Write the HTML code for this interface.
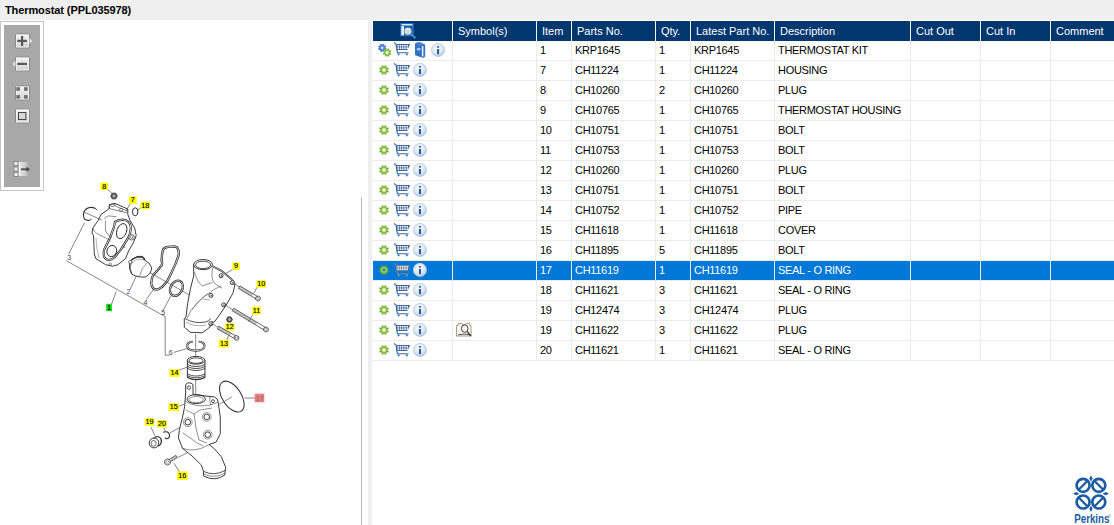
<!DOCTYPE html>
<html><head><meta charset="utf-8"><style>
*{margin:0;padding:0;box-sizing:border-box}
html,body{width:1114px;height:525px;overflow:hidden;background:#fff;font-family:"Liberation Sans",sans-serif;font-size:11px;color:#000}
.a{position:absolute}
#top{left:0;top:0;width:1114px;height:20px;background:#efefef}
#title{left:5px;top:3px;font-weight:bold;font-size:11px;line-height:14px;white-space:nowrap;letter-spacing:-0.1px}
#strip{left:368px;top:20px;width:4px;height:505px;background:#efefef}
#tb{left:0;top:21px;width:44px;height:170px;border:1px solid #c4c4c4;background:#fff}
#tbi{left:4px;top:25px;width:36px;height:162px;background:#a8a8a8}
.hd{top:21px;height:20px;background:#00376f;color:#fff;line-height:20px;white-space:nowrap;overflow:hidden;padding-left:5px}
.hs{top:21px;height:20px;width:1px;background:#f4f4f4}
.c{height:19px;line-height:19px;white-space:nowrap;overflow:hidden;padding-left:3px;letter-spacing:-0.3px}
.gl{height:1px;background:#ebebeb}
.vl{width:1px;background:#ebebeb}
svg{position:absolute;overflow:visible}
</style></head><body>

<svg width="0" height="0" style="left:0;top:0">
<defs>
 <radialGradient id="ig" cx="45%" cy="40%" r="60%">
  <stop offset="0" stop-color="#f6f9fc"/><stop offset="0.6" stop-color="#dfe9f3"/><stop offset="1" stop-color="#a9c4de"/>
 </radialGradient>
 <radialGradient id="gg" cx="50%" cy="50%" r="50%">
  <stop offset="0.3" stop-color="#9ccf52"/><stop offset="1" stop-color="#6fa828"/>
 </radialGradient>
 <radialGradient id="gb" cx="50%" cy="50%" r="50%">
  <stop offset="0.3" stop-color="#5a95ef"/><stop offset="1" stop-color="#2d66cc"/>
 </radialGradient>
 <linearGradient id="bg" x1="0" y1="0" x2="0" y2="1">
  <stop offset="0" stop-color="#f4f4f4"/><stop offset="1" stop-color="#d2d2d2"/>
 </linearGradient>
 <symbol id="gear" viewBox="-5.5 -5.5 11 11">
  <path fill="url(#gg)" d="M3.69,0.27 L5.11,0.94 L4.28,2.95 L2.80,2.42 L2.42,2.80 L2.95,4.28 L0.94,5.11 L0.27,3.69 L-0.27,3.69 L-0.94,5.11 L-2.95,4.28 L-2.42,2.80 L-2.80,2.42 L-4.28,2.95 L-5.11,0.94 L-3.69,0.27 L-3.69,-0.27 L-5.11,-0.94 L-4.28,-2.95 L-2.80,-2.42 L-2.42,-2.80 L-2.95,-4.28 L-0.94,-5.11 L-0.27,-3.69 L0.27,-3.69 L0.94,-5.11 L2.95,-4.28 L2.42,-2.80 L2.80,-2.42 L4.28,-2.95 L5.11,-0.94 L3.69,-0.27Z"/>
  <circle r="2.2" fill="#c8ec98" opacity="0.6"/><circle r="1.5" fill="#fff"/>
 </symbol>
 <symbol id="gearsel" viewBox="-5.5 -5.5 11 11">
  <path fill="url(#gg)" d="M3.69,0.27 L5.11,0.94 L4.28,2.95 L2.80,2.42 L2.42,2.80 L2.95,4.28 L0.94,5.11 L0.27,3.69 L-0.27,3.69 L-0.94,5.11 L-2.95,4.28 L-2.42,2.80 L-2.80,2.42 L-4.28,2.95 L-5.11,0.94 L-3.69,0.27 L-3.69,-0.27 L-5.11,-0.94 L-4.28,-2.95 L-2.80,-2.42 L-2.42,-2.80 L-2.95,-4.28 L-0.94,-5.11 L-0.27,-3.69 L0.27,-3.69 L0.94,-5.11 L2.95,-4.28 L2.42,-2.80 L2.80,-2.42 L4.28,-2.95 L5.11,-0.94 L3.69,-0.27Z"/>
  <circle r="2.2" fill="#c8ec98" opacity="0.6"/><circle r="1.5" fill="#1a78c8"/>
 </symbol>
 <symbol id="gearb" viewBox="-5.5 -5.5 11 11">
  <path fill="url(#gb)" d="M3.69,0.27 L5.11,0.94 L4.28,2.95 L2.80,2.42 L2.42,2.80 L2.95,4.28 L0.94,5.11 L0.27,3.69 L-0.27,3.69 L-0.94,5.11 L-2.95,4.28 L-2.42,2.80 L-2.80,2.42 L-4.28,2.95 L-5.11,0.94 L-3.69,0.27 L-3.69,-0.27 L-5.11,-0.94 L-4.28,-2.95 L-2.80,-2.42 L-2.42,-2.80 L-2.95,-4.28 L-0.94,-5.11 L-0.27,-3.69 L0.27,-3.69 L0.94,-5.11 L2.95,-4.28 L2.42,-2.80 L2.80,-2.42 L4.28,-2.95 L5.11,-0.94 L3.69,-0.27Z"/>
  <circle r="1.4" fill="#fff"/>
 </symbol>
 <linearGradient id="fade" x1="0" y1="0" x2="1" y2="0">
  <stop offset="0" stop-color="#e8e8e8"/><stop offset="0.6" stop-color="#cfcfcf"/><stop offset="1" stop-color="#a8a8a8"/>
 </linearGradient>
 <symbol id="cart" viewBox="0 0 17 14">
  <path d="M0.4,0.4 L2.6,2.4 L3.3,8 L3.8,10.7 H15" fill="none" stroke="#44689b" stroke-width="1.15"/>
  <path d="M2.5,2 H16.6 L13.7,8 H3.1 Z" fill="#44689b"/>
  <rect x="3.9" y="3.0" width="1.5" height="1.55" fill="#fff"/><rect x="6.15" y="3.0" width="1.5" height="1.55" fill="#fff"/><rect x="8.4" y="3.0" width="1.5" height="1.55" fill="#fff"/><rect x="10.65" y="3.0" width="1.5" height="1.55" fill="#fff"/><rect x="12.9" y="3.0" width="1.5" height="1.55" fill="#fff"/><rect x="3.9" y="5.35" width="1.5" height="1.6" fill="#fff"/><rect x="6.15" y="5.35" width="1.5" height="1.6" fill="#fff"/><rect x="8.4" y="5.35" width="1.5" height="1.6" fill="#fff"/><rect x="10.65" y="5.35" width="1.5" height="1.6" fill="#fff"/><rect x="12.9" y="5.35" width="1.5" height="1.6" fill="#fff"/>
  <circle cx="5" cy="12.3" r="1.15" fill="#2f7fd0"/>
  <circle cx="13.2" cy="12.3" r="1.15" fill="#2f7fd0"/>
 </symbol>
 <symbol id="cartsel" viewBox="0 0 17 14">
  <path d="M0.4,0.4 L2.6,2.4 L3.3,8 L3.8,10.7 H15" fill="none" stroke="#7a8797" stroke-width="1.15"/>
  <path d="M2.5,2 H16.6 L13.7,8 H3.1 Z" fill="#7a8797"/>
  <rect x="3.9" y="3.0" width="1.5" height="1.55" fill="#e6ebf2"/><rect x="6.15" y="3.0" width="1.5" height="1.55" fill="#e6ebf2"/><rect x="8.4" y="3.0" width="1.5" height="1.55" fill="#e6ebf2"/><rect x="10.65" y="3.0" width="1.5" height="1.55" fill="#e6ebf2"/><rect x="12.9" y="3.0" width="1.5" height="1.55" fill="#e6ebf2"/><rect x="3.9" y="5.35" width="1.5" height="1.6" fill="#e6ebf2"/><rect x="6.15" y="5.35" width="1.5" height="1.6" fill="#e6ebf2"/><rect x="8.4" y="5.35" width="1.5" height="1.6" fill="#e6ebf2"/><rect x="10.65" y="5.35" width="1.5" height="1.6" fill="#e6ebf2"/><rect x="12.9" y="5.35" width="1.5" height="1.6" fill="#e6ebf2"/>
  <circle cx="5" cy="12.3" r="1.15" fill="#8a98a8"/>
  <circle cx="13.2" cy="12.3" r="1.15" fill="#8a98a8"/>
 </symbol>
 <symbol id="info" viewBox="0 0 14 14">
  <circle cx="7" cy="7" r="6.8" fill="url(#ig)"/>
  <circle cx="7" cy="7" r="6.5" fill="none" stroke="#b7cde3" stroke-width="0.6"/>
  <rect x="6" y="3.2" width="2.1" height="1.5" fill="#2c5b9b"/>
  <rect x="6" y="6.1" width="2.1" height="5.1" fill="#2c5b9b"/>
 </symbol>
</defs>
</svg>

<div class="a" id="top"></div><div class="a" id="title">Thermostat (PPL035978)</div><div class="a" id="strip"></div><div class="a" style="left:361px;top:197px;width:1px;height:328px;background:#b9b9b9"></div><div class="a" id="tb"></div><div class="a" id="tbi"></div><div class="a hd" style="left:373px;width:79px"></div><div class="a hd" style="left:453px;width:83px">Symbol(s)</div><div class="a hd" style="left:537px;width:34px">Item</div><div class="a hd" style="left:572px;width:83px">Parts No.</div><div class="a hd" style="left:656px;width:34px">Qty.</div><div class="a hd" style="left:691px;width:83px">Latest Part No.</div><div class="a hd" style="left:775px;width:135px">Description</div><div class="a hd" style="left:911px;width:69px">Cut Out</div><div class="a hd" style="left:981px;width:69px">Cut In</div><div class="a hd" style="left:1051px;width:63px">Comment</div><div class="a hs" style="left:452px"></div><div class="a hs" style="left:536px"></div><div class="a hs" style="left:571px"></div><div class="a hs" style="left:655px"></div><div class="a hs" style="left:690px"></div><div class="a hs" style="left:774px"></div><div class="a hs" style="left:910px"></div><div class="a hs" style="left:980px"></div><div class="a hs" style="left:1050px"></div><div class="a gl" style="left:373px;top:60px;width:741px"></div><div class="a c" style="left:537px;top:41px;width:34px;color:#000">1</div><div class="a c" style="left:572px;top:41px;width:83px;color:#000">KRP1645</div><div class="a c" style="left:656px;top:41px;width:34px;color:#000">1</div><div class="a c" style="left:691px;top:41px;width:83px;color:#000">KRP1645</div><div class="a c" style="left:775px;top:41px;width:135px;color:#000">THERMOSTAT KIT</div><div class="a gl" style="left:373px;top:80px;width:741px"></div><div class="a c" style="left:537px;top:61px;width:34px;color:#000">7</div><div class="a c" style="left:572px;top:61px;width:83px;color:#000">CH11224</div><div class="a c" style="left:656px;top:61px;width:34px;color:#000">1</div><div class="a c" style="left:691px;top:61px;width:83px;color:#000">CH11224</div><div class="a c" style="left:775px;top:61px;width:135px;color:#000">HOUSING</div><div class="a gl" style="left:373px;top:100px;width:741px"></div><div class="a c" style="left:537px;top:81px;width:34px;color:#000">8</div><div class="a c" style="left:572px;top:81px;width:83px;color:#000">CH10260</div><div class="a c" style="left:656px;top:81px;width:34px;color:#000">2</div><div class="a c" style="left:691px;top:81px;width:83px;color:#000">CH10260</div><div class="a c" style="left:775px;top:81px;width:135px;color:#000">PLUG</div><div class="a gl" style="left:373px;top:120px;width:741px"></div><div class="a c" style="left:537px;top:101px;width:34px;color:#000">9</div><div class="a c" style="left:572px;top:101px;width:83px;color:#000">CH10765</div><div class="a c" style="left:656px;top:101px;width:34px;color:#000">1</div><div class="a c" style="left:691px;top:101px;width:83px;color:#000">CH10765</div><div class="a c" style="left:775px;top:101px;width:135px;color:#000">THERMOSTAT HOUSING</div><div class="a gl" style="left:373px;top:140px;width:741px"></div><div class="a c" style="left:537px;top:121px;width:34px;color:#000">10</div><div class="a c" style="left:572px;top:121px;width:83px;color:#000">CH10751</div><div class="a c" style="left:656px;top:121px;width:34px;color:#000">1</div><div class="a c" style="left:691px;top:121px;width:83px;color:#000">CH10751</div><div class="a c" style="left:775px;top:121px;width:135px;color:#000">BOLT</div><div class="a gl" style="left:373px;top:160px;width:741px"></div><div class="a c" style="left:537px;top:141px;width:34px;color:#000">11</div><div class="a c" style="left:572px;top:141px;width:83px;color:#000">CH10753</div><div class="a c" style="left:656px;top:141px;width:34px;color:#000">1</div><div class="a c" style="left:691px;top:141px;width:83px;color:#000">CH10753</div><div class="a c" style="left:775px;top:141px;width:135px;color:#000">BOLT</div><div class="a gl" style="left:373px;top:180px;width:741px"></div><div class="a c" style="left:537px;top:161px;width:34px;color:#000">12</div><div class="a c" style="left:572px;top:161px;width:83px;color:#000">CH10260</div><div class="a c" style="left:656px;top:161px;width:34px;color:#000">1</div><div class="a c" style="left:691px;top:161px;width:83px;color:#000">CH10260</div><div class="a c" style="left:775px;top:161px;width:135px;color:#000">PLUG</div><div class="a gl" style="left:373px;top:200px;width:741px"></div><div class="a c" style="left:537px;top:181px;width:34px;color:#000">13</div><div class="a c" style="left:572px;top:181px;width:83px;color:#000">CH10751</div><div class="a c" style="left:656px;top:181px;width:34px;color:#000">1</div><div class="a c" style="left:691px;top:181px;width:83px;color:#000">CH10751</div><div class="a c" style="left:775px;top:181px;width:135px;color:#000">BOLT</div><div class="a gl" style="left:373px;top:220px;width:741px"></div><div class="a c" style="left:537px;top:201px;width:34px;color:#000">14</div><div class="a c" style="left:572px;top:201px;width:83px;color:#000">CH10752</div><div class="a c" style="left:656px;top:201px;width:34px;color:#000">1</div><div class="a c" style="left:691px;top:201px;width:83px;color:#000">CH10752</div><div class="a c" style="left:775px;top:201px;width:135px;color:#000">PIPE</div><div class="a gl" style="left:373px;top:240px;width:741px"></div><div class="a c" style="left:537px;top:221px;width:34px;color:#000">15</div><div class="a c" style="left:572px;top:221px;width:83px;color:#000">CH11618</div><div class="a c" style="left:656px;top:221px;width:34px;color:#000">1</div><div class="a c" style="left:691px;top:221px;width:83px;color:#000">CH11618</div><div class="a c" style="left:775px;top:221px;width:135px;color:#000">COVER</div><div class="a gl" style="left:373px;top:260px;width:741px"></div><div class="a c" style="left:537px;top:241px;width:34px;color:#000">16</div><div class="a c" style="left:572px;top:241px;width:83px;color:#000">CH11895</div><div class="a c" style="left:656px;top:241px;width:34px;color:#000">5</div><div class="a c" style="left:691px;top:241px;width:83px;color:#000">CH11895</div><div class="a c" style="left:775px;top:241px;width:135px;color:#000">BOLT</div><div class="a" style="left:373px;top:261px;width:741px;height:19px;background:#0078d7"></div><div class="a gl" style="left:373px;top:280px;width:741px"></div><div class="a c" style="left:537px;top:261px;width:34px;color:#fff">17</div><div class="a c" style="left:572px;top:261px;width:83px;color:#fff">CH11619</div><div class="a c" style="left:656px;top:261px;width:34px;color:#fff">1</div><div class="a c" style="left:691px;top:261px;width:83px;color:#fff">CH11619</div><div class="a c" style="left:775px;top:261px;width:135px;color:#fff">SEAL - O RING</div><div class="a gl" style="left:373px;top:300px;width:741px"></div><div class="a c" style="left:537px;top:281px;width:34px;color:#000">18</div><div class="a c" style="left:572px;top:281px;width:83px;color:#000">CH11621</div><div class="a c" style="left:656px;top:281px;width:34px;color:#000">3</div><div class="a c" style="left:691px;top:281px;width:83px;color:#000">CH11621</div><div class="a c" style="left:775px;top:281px;width:135px;color:#000">SEAL - O RING</div><div class="a gl" style="left:373px;top:320px;width:741px"></div><div class="a c" style="left:537px;top:301px;width:34px;color:#000">19</div><div class="a c" style="left:572px;top:301px;width:83px;color:#000">CH12474</div><div class="a c" style="left:656px;top:301px;width:34px;color:#000">3</div><div class="a c" style="left:691px;top:301px;width:83px;color:#000">CH12474</div><div class="a c" style="left:775px;top:301px;width:135px;color:#000">PLUG</div><div class="a gl" style="left:373px;top:340px;width:741px"></div><div class="a c" style="left:537px;top:321px;width:34px;color:#000">19</div><div class="a c" style="left:572px;top:321px;width:83px;color:#000">CH11622</div><div class="a c" style="left:656px;top:321px;width:34px;color:#000">3</div><div class="a c" style="left:691px;top:321px;width:83px;color:#000">CH11622</div><div class="a c" style="left:775px;top:321px;width:135px;color:#000">PLUG</div><div class="a gl" style="left:373px;top:360px;width:741px"></div><div class="a c" style="left:537px;top:341px;width:34px;color:#000">20</div><div class="a c" style="left:572px;top:341px;width:83px;color:#000">CH11621</div><div class="a c" style="left:656px;top:341px;width:34px;color:#000">1</div><div class="a c" style="left:691px;top:341px;width:83px;color:#000">CH11621</div><div class="a c" style="left:775px;top:341px;width:135px;color:#000">SEAL - O RING</div><div class="a vl" style="left:452px;top:41px;height:320px"></div><div class="a vl" style="left:536px;top:41px;height:320px"></div><div class="a vl" style="left:571px;top:41px;height:320px"></div><div class="a vl" style="left:655px;top:41px;height:320px"></div><div class="a vl" style="left:690px;top:41px;height:320px"></div><div class="a vl" style="left:774px;top:41px;height:320px"></div><div class="a vl" style="left:910px;top:41px;height:320px"></div><div class="a vl" style="left:980px;top:41px;height:320px"></div><div class="a vl" style="left:1050px;top:41px;height:320px"></div><svg width="1114" height="525" style="left:0;top:0"><use href="#gearb" x="377.8" y="43.4" width="8.8" height="8.8"/><use href="#gear" x="382.6" y="48" width="9" height="9"/><use href="#cart" x="393.6" y="42" width="17" height="14"/><path d="M415,43.6 Q416.5,41.8 419.5,41.9 L424.6,44.2 Q425.2,44.8 425.2,46 L425.2,56.6 Q424.5,57.8 422.5,57.8 L416,55.6 Q415,55 415,54 Z" fill="#2f72c0"/><path d="M422.6,46.2 L422.6,56.4" stroke="#f4f8fc" stroke-width="1.5"/><path d="M416.5,44.2 L421.6,45.4 M418.3,43 L423.4,44.6" stroke="#5b97da" stroke-width="0.7"/><path d="M416.5,48.8 Q418,47 419.5,48 Q421,47.6 421,49.5 Q419.5,51.2 418,50.4 Q416.6,50.6 416.5,48.8 Z" fill="#9fc0e8"/><use href="#info" x="431" y="43" width="14" height="14"/><use href="#gear" x="378.8" y="64.8" width="10.4" height="10.4"/><use href="#cart" x="393.6" y="63" width="17" height="14"/><use href="#info" x="412.9" y="62.9" width="14" height="14"/><use href="#gear" x="378.8" y="84.8" width="10.4" height="10.4"/><use href="#cart" x="393.6" y="83" width="17" height="14"/><use href="#info" x="412.9" y="82.9" width="14" height="14"/><use href="#gear" x="378.8" y="104.8" width="10.4" height="10.4"/><use href="#cart" x="393.6" y="103" width="17" height="14"/><use href="#info" x="412.9" y="102.9" width="14" height="14"/><use href="#gear" x="378.8" y="124.8" width="10.4" height="10.4"/><use href="#cart" x="393.6" y="123" width="17" height="14"/><use href="#info" x="412.9" y="122.9" width="14" height="14"/><use href="#gear" x="378.8" y="144.8" width="10.4" height="10.4"/><use href="#cart" x="393.6" y="143" width="17" height="14"/><use href="#info" x="412.9" y="142.9" width="14" height="14"/><use href="#gear" x="378.8" y="164.8" width="10.4" height="10.4"/><use href="#cart" x="393.6" y="163" width="17" height="14"/><use href="#info" x="412.9" y="162.9" width="14" height="14"/><use href="#gear" x="378.8" y="184.8" width="10.4" height="10.4"/><use href="#cart" x="393.6" y="183" width="17" height="14"/><use href="#info" x="412.9" y="182.9" width="14" height="14"/><use href="#gear" x="378.8" y="204.8" width="10.4" height="10.4"/><use href="#cart" x="393.6" y="203" width="17" height="14"/><use href="#info" x="412.9" y="202.9" width="14" height="14"/><use href="#gear" x="378.8" y="224.8" width="10.4" height="10.4"/><use href="#cart" x="393.6" y="223" width="17" height="14"/><use href="#info" x="412.9" y="222.9" width="14" height="14"/><use href="#gear" x="378.8" y="244.8" width="10.4" height="10.4"/><use href="#cart" x="393.6" y="243" width="17" height="14"/><use href="#info" x="412.9" y="242.9" width="14" height="14"/><use href="#gearsel" x="378.8" y="264.8" width="10.4" height="10.4"/><use href="#cartsel" x="393.6" y="263" width="17" height="14"/><use href="#info" x="412.9" y="262.9" width="14" height="14"/><use href="#gear" x="378.8" y="284.8" width="10.4" height="10.4"/><use href="#cart" x="393.6" y="283" width="17" height="14"/><use href="#info" x="412.9" y="282.9" width="14" height="14"/><use href="#gear" x="378.8" y="304.8" width="10.4" height="10.4"/><use href="#cart" x="393.6" y="303" width="17" height="14"/><use href="#info" x="412.9" y="302.9" width="14" height="14"/><use href="#gear" x="378.8" y="324.8" width="10.4" height="10.4"/><use href="#cart" x="393.6" y="323" width="17" height="14"/><use href="#info" x="412.9" y="322.9" width="14" height="14"/><use href="#gear" x="378.8" y="344.8" width="10.4" height="10.4"/><use href="#cart" x="393.6" y="343" width="17" height="14"/><use href="#info" x="412.9" y="342.9" width="14" height="14"/><rect x="400.3" y="23.2" width="13.3" height="13" fill="#2a7bd0"/><rect x="401.5" y="24.1" width="11" height="1.2" fill="#e8f2fb"/><rect x="401.4" y="26.2" width="11" height="9" fill="#1f5fae"/><rect x="401.4" y="26.2" width="2.6" height="9" fill="#fff"/><path d="M404,27 V35" stroke="#7fb0e6" stroke-width="0.6" stroke-dasharray="0.8 0.8"/><path d="M410.5,33.5 L415.5,38.2" stroke="#4a88cc" stroke-width="2"/><circle cx="407.9" cy="31.2" r="4.1" fill="#2a6cb8"/><circle cx="407.9" cy="31.2" r="3.5" fill="#d9d9d9"/><path d="M405.6,29.3 Q407.5,27.8 409.8,29" stroke="#fff" stroke-width="1" fill="none"/><path d="M456.6,325.5 L458.2,325.5 L458.2,323.4 L461.2,323.3 L464,325 L467,323.3 L469.8,323.4 L469.8,325.5 L471,325.5 L471,336 L456.4,336 Z" fill="#f6f6f6" stroke="#8a8a5a" stroke-width="0.8"/><path d="M458.2,334.8 Q464,333.3 469.8,334.8" fill="none" stroke="#444" stroke-width="0.9"/><path d="M464,325 V334" stroke="#ccc" stroke-width="0.5"/><ellipse cx="464.7" cy="328.6" rx="3.3" ry="3.8" fill="none" stroke="#333" stroke-width="0.9"/><path d="M467.2,331.6 L471,336.2" stroke="#222" stroke-width="1.2"/><circle cx="1083.1" cy="485.3" r="6.5" fill="none" stroke="#1b5ca3" stroke-width="2.7"/><path d="M1078.86,489.54 L1087.34,481.06" stroke="#1b5ca3" stroke-width="2.3"/><circle cx="1098.8" cy="485.3" r="6.5" fill="none" stroke="#1b5ca3" stroke-width="2.7"/><path d="M1094.56,481.06 L1103.04,489.54" stroke="#1b5ca3" stroke-width="2.3"/><circle cx="1083.1" cy="502" r="6.5" fill="none" stroke="#1b5ca3" stroke-width="2.7"/><path d="M1078.86,497.76 L1087.34,506.24" stroke="#1b5ca3" stroke-width="2.3"/><circle cx="1098.8" cy="502" r="6.5" fill="none" stroke="#1b5ca3" stroke-width="2.7"/><path d="M1094.56,506.24 L1103.04,497.76" stroke="#1b5ca3" stroke-width="2.3"/><path d="M1091,475.3 L1092.6,478.5 L1091,481.7 L1089.4,478.5 Z" fill="#1b5ca3"/><path d="M1091,505.6 L1092.6,508.8 L1091,512.0 L1089.4,508.8 Z" fill="#1b5ca3"/><path d="M1076.2,492.09999999999997 L1079.4,493.7 L1076.2,495.3 L1073.0,493.7 Z" fill="#1b5ca3"/><path d="M1105.8,492.09999999999997 L1109.0,493.7 L1105.8,495.3 L1102.6,493.7 Z" fill="#1b5ca3"/><text x="1074.2" y="522.6" font-size="12" font-weight="bold" fill="#1b5ca3" textLength="35.3" lengthAdjust="spacingAndGlyphs">Perkins</text><circle cx="1109.6" cy="515.5" r="0.8" fill="none" stroke="#1b5ca3" stroke-width="0.4"/></svg><svg width="368" height="525" style="left:0;top:0" font-family="Liberation Sans, sans-serif"><path d="M147.1,271 L189,294.8" fill="none" stroke="#444" stroke-width="0.65"/><path d="M195.7,334 L195.7,360" fill="none" stroke="#444" stroke-width="0.65"/><path d="M195.7,379 L195.7,402" fill="none" stroke="#444" stroke-width="0.65"/><path d="M170,432.9 L187.1,423.3" fill="none" stroke="#444" stroke-width="0.65"/><path d="M177.6,457.6 L206.2,443.3" fill="none" stroke="#444" stroke-width="0.65"/><path d="M224,277 L241,288" fill="none" stroke="#444" stroke-width="0.65"/><path d="M226,305.5 L234,310.5" fill="none" stroke="#444" stroke-width="0.65"/><path d="M212,323.5 L219,328" fill="none" stroke="#444" stroke-width="0.65"/><path d="M66.2,260.6 L165.2,316.7 L165.2,355.2 L169.5,355.2" fill="none" stroke="#444" stroke-width="0.65"/><path d="M84.4,222.9 L68.6,254.3" fill="none" stroke="#444" stroke-width="0.65"/><text x="67.2" y="259.5" font-size="7" fill="#444">3</text><path d="M111.5,304.3 L116.3,291.4" fill="none" stroke="#444" stroke-width="0.65"/><rect x="106.10" y="303.80" width="5.90" height="7.50" fill="#22dd22"/><text x="109.05" y="309.70" font-size="6.5" text-anchor="middle" fill="#000" stroke="#000" stroke-width="0.15">1</text><path d="M130,289.7 L137.4,273.6" fill="none" stroke="#444" stroke-width="0.65"/><text x="126.6" y="294.2" font-size="7" fill="#444">2</text><path d="M146.2,299.5 L153.8,289" fill="none" stroke="#444" stroke-width="0.65"/><text x="143.6" y="304.5" font-size="7" fill="#444">4</text><path d="M163.3,310 L171,295.7" fill="none" stroke="#444" stroke-width="0.65"/><text x="161.2" y="314.6" font-size="7" fill="#444">5</text><path d="M173.8,352.4 L187,348.6" fill="none" stroke="#444" stroke-width="0.65"/><text x="168.7" y="354.8" font-size="7" fill="#444">6</text><path d="M95.5,208.5 C90,206 85,208 83.7,213 C82.5,218 84.5,221 90,220.3" fill="none" stroke="#333" stroke-width="1.1"/><path d="M95.5,208.5 L96.8,210.2 M90,220.3 L91.5,219" fill="none" stroke="#333" stroke-width="1"/><path d="M109.5,204.5 L114.9,203.4 L127.8,209 L127.8,214.4 L130.1,220.5 L134.7,228.1 L136.2,235.7 L133.1,243.3 L128.6,251 L125.5,258.6 L117.9,264.7 L112.6,266.2 L105.7,264.7 L95.8,258.6 L94.3,254 L93.5,235.7 L92,232.7 L92.8,228.1 L98.1,220.5 L101.1,214.4 L108.8,209 Z" fill="#fff" stroke="#262626" stroke-width="0.9" stroke-linejoin="round"/><path d="M109.5,204.5 L109.5,208.6 L127,212.9 M114.9,203.4 L114.9,206 L127.8,211" fill="none" stroke="#333" stroke-width="0.6"/><circle cx="121" cy="209.8" r="1.5" fill="none" stroke="#333" stroke-width="0.6"/><ellipse cx="112.4" cy="205.4" rx="2" ry="1.2" fill="none" stroke="#333" stroke-width="0.6"/><path d="M114.9,222 Q118,220 122.5,219.7 Q126.5,219.8 128.6,222 Q131,224.5 130.9,228.1 Q130.5,233 128.6,237.2 L121,249.4 L114.9,257 Q111.8,259.8 108.8,260.1 Q105.5,259.6 104.2,257 Q103.3,253 104.2,249.4 L110.3,237.2 L114.1,226.6 Z" fill="none" stroke="#262626" stroke-width="2.2" stroke-linejoin="round"/><path d="M114.9,222 Q118,220 122.5,219.7 Q126.5,219.8 128.6,222 Q131,224.5 130.9,228.1 Q130.5,233 128.6,237.2 L121,249.4 L114.9,257 Q111.8,259.8 108.8,260.1 Q105.5,259.6 104.2,257 Q103.3,253 104.2,249.4 L110.3,237.2 L114.1,226.6 Z" fill="none" stroke="#fff" stroke-width="0.8" stroke-linejoin="round"/><ellipse cx="121.7" cy="231.1" rx="4.8" ry="7.8" transform="rotate(20 121.7 231.1)" fill="none" stroke="#262626" stroke-width="0.9"/><ellipse cx="111.8" cy="251" rx="4.8" ry="5.7" transform="rotate(20 111.8 251)" fill="none" stroke="#262626" stroke-width="0.9"/><circle cx="131.6" cy="237.2" r="2.8" fill="#fff" stroke="#333" stroke-width="0.7"/><circle cx="131.6" cy="237.2" r="1.3" fill="none" stroke="#333" stroke-width="0.6"/><path d="M104.2,219 Q106,216 108.8,215.9 L116.4,216.7 M105.7,220.5 Q104.8,226 105.7,231.1 Q107.5,235.5 111.8,237.2" fill="none" stroke="#444" stroke-width="0.6"/><path d="M92.8,228.1 Q94,231.5 96.6,233.4 L110.3,240.3" fill="none" stroke="#444" stroke-width="0.6"/><path d="M96,238 Q96.5,250 99,258" fill="none" stroke="#666" stroke-width="0.5"/><circle cx="110.3" cy="264.2" r="1.2" fill="none" stroke="#444" stroke-width="0.6"/><circle cx="124" cy="247" r="0.9" fill="none" stroke="#444" stroke-width="0.5"/><path d="M85,212.5 L101.8,220.1" fill="none" stroke="#444" stroke-width="0.65"/><path d="M107.6,189.5 L112.4,193.7" fill="none" stroke="#444" stroke-width="0.65"/><path d="M117.30,196.00 L115.65,198.86 L112.35,198.86 L110.70,196.00 L112.35,193.14 L115.65,193.14Z" fill="#555" stroke="#333" stroke-width="0.8"/><circle cx="114" cy="196" r="1.6" fill="#aaa"/><rect x="100.50" y="182.50" width="7.60" height="7.60" fill="#ffff00"/><text x="104.30" y="188.50" font-size="7.2" text-anchor="middle" fill="#000" stroke="#000" stroke-width="0.15">8</text><path d="M130.5,203.2 L125.7,211.4" fill="none" stroke="#444" stroke-width="0.65"/><rect x="129.00" y="196.30" width="7.70" height="7.40" fill="#ffff00"/><text x="132.85" y="202.10" font-size="7.2" text-anchor="middle" fill="#000" stroke="#000" stroke-width="0.15">7</text><path d="M141,207.6 L137,210.5" fill="none" stroke="#444" stroke-width="0.65"/><ellipse cx="135.2" cy="211.8" rx="2.7" ry="4" fill="none" stroke="#333" stroke-width="1"/><rect x="140.50" y="201.50" width="9.50" height="7.60" fill="#ffff00"/><text x="145.25" y="207.50" font-size="7.2" text-anchor="middle" fill="#000" stroke="#000" stroke-width="0.15">18</text><path d="M129.5,262.5 Q131,259 137.5,256.4 L142.1,256.4 Q144.5,257.5 145.1,260.5 Q150,262.5 151.6,267.8 Q151.5,274 145.1,277 L140.6,277 Q135,276.5 131.5,274 Q128.8,269 129.5,262.5 Z" fill="#fff" stroke="#262626" stroke-width="0.9"/><path d="M130,262.5 Q131.5,258.8 137.5,256.9 L142,256.9 Q144,257.8 144.6,260.3" fill="none" stroke="#333" stroke-width="1.5"/><path d="M130.5,266 Q132,261 138,259 L143.5,259.8" fill="none" stroke="#555" stroke-width="0.5"/><path d="M146.7,263.3 Q141.3,267.8 139.8,275.8" fill="none" stroke="#666" stroke-width="0.7"/><path d="M130,264 Q129.5,270 132,273.5" fill="none" stroke="#444" stroke-width="0.9"/><path d="M128.6,261.3 Q129.5,259.8 131.5,260.3 L132,263 L129.2,263.5 Z" fill="#fff" stroke="#333" stroke-width="0.7"/><path d="M163.3,249.1 Q165,247.3 167.9,246.9 L174.7,246.3 Q177.5,247 178.1,249.1 Q179,252 178.7,254.9 L175.9,262.9 L171.3,273.1 L167.3,281.1 L162.1,286.9 Q159,289.5 156.4,289.7 Q154,289.5 153,288 Q151,285 151.3,282.3 Q151.8,278 153,275.4 L159.9,267.4 Q162.5,265 162.1,263 L161.6,260.6 L162.1,253.7 Z" fill="none" stroke="#262626" stroke-width="2.3" stroke-linejoin="round"/><path d="M163.3,249.1 Q165,247.3 167.9,246.9 L174.7,246.3 Q177.5,247 178.1,249.1 Q179,252 178.7,254.9 L175.9,262.9 L171.3,273.1 L167.3,281.1 L162.1,286.9 Q159,289.5 156.4,289.7 Q154,289.5 153,288 Q151,285 151.3,282.3 Q151.8,278 153,275.4 L159.9,267.4 Q162.5,265 162.1,263 L161.6,260.6 L162.1,253.7 Z" fill="none" stroke="#fff" stroke-width="0.8" stroke-linejoin="round"/><ellipse cx="176.4" cy="288.3" rx="5.9" ry="8.1" transform="rotate(30 176.4 288.3)" fill="none" stroke="#262626" stroke-width="2.3"/><ellipse cx="176.4" cy="288.3" rx="5.9" ry="8.1" transform="rotate(30 176.4 288.3)" fill="none" stroke="#fff" stroke-width="0.7"/><path d="M193.7,264 L193.7,275.7 L190.3,289.4 L187.7,303.1 L186,316.9 L184.3,318.6 L184.3,327.1 L190.3,332.3 L202.3,332.8 L210,327.1 L210.9,322 L214.3,322 L219.4,315.1 L226.3,304.9 L233.1,292.9 L234.9,284.3 L231.4,279.1 L221.1,270.6 L212.6,266.3 Z" fill="#fff" stroke="#262626" stroke-width="0.9"/><path d="M212.6,266.3 L221.1,270.6 L231.4,279.1 L234.9,284.3" fill="none" stroke="#333" stroke-width="1.8"/><path d="M212.6,266.3 L221.1,270.6 L231.4,279.1 L234.9,284.3" fill="none" stroke="#fff" stroke-width="0.6"/><ellipse cx="203.1" cy="264.6" rx="9.4" ry="5.1" fill="#fff" stroke="#262626" stroke-width="0.9"/><ellipse cx="203.1" cy="264.9" rx="7.6" ry="3.7" fill="none" stroke="#262626" stroke-width="0.8"/><path d="M194.5,272 Q197,282 202.3,286 Q207,284 212.6,282.6" fill="none" stroke="#444" stroke-width="0.6"/><path d="M212.5,268 Q211,276 213,281 Q216,286 222,288" fill="none" stroke="#444" stroke-width="0.6"/><path d="M186.9,318.6 Q190,310 197.1,303.1 Q205,295 214.3,289.4 L221,286" fill="none" stroke="#444" stroke-width="0.6"/><path d="M192,310 Q200,298 208,294 M203,299 L210,300" fill="none" stroke="#555" stroke-width="0.5"/><path d="M185.1,318.6 Q193.7,324 205.7,322 Q209,321 210.9,318.6" fill="none" stroke="#262626" stroke-width="0.8"/><path d="M186,322 Q194,327.5 206,325" fill="none" stroke="#555" stroke-width="0.5"/><circle cx="221.1" cy="275.7" r="2" fill="#fff" stroke="#262626" stroke-width="0.9"/><circle cx="221.4" cy="275.9" r="0.9" fill="#666"/><circle cx="232.3" cy="282.6" r="2" fill="#fff" stroke="#262626" stroke-width="0.9"/><circle cx="232.60000000000002" cy="282.8" r="0.9" fill="#666"/><circle cx="210.9" cy="295.4" r="2" fill="#fff" stroke="#262626" stroke-width="0.9"/><circle cx="211.20000000000002" cy="295.59999999999997" r="0.9" fill="#666"/><circle cx="223.7" cy="304.9" r="2" fill="#fff" stroke="#262626" stroke-width="0.9"/><circle cx="224.0" cy="305.09999999999997" r="0.9" fill="#666"/><circle cx="210.9" cy="323.7" r="2" fill="#fff" stroke="#262626" stroke-width="0.9"/><circle cx="211.20000000000002" cy="323.9" r="0.9" fill="#666"/><path d="M232.9,269.4 L225.6,273.5" fill="none" stroke="#444" stroke-width="0.65"/><rect x="232.40" y="262.50" width="7.30" height="7.40" fill="#ffff00"/><text x="236.05" y="268.30" font-size="7.2" text-anchor="middle" fill="#000" stroke="#000" stroke-width="0.15">9</text><path d="M238.45,288.44 L257.25,299.74 L258.75,297.26 L239.95,285.96 Z" fill="#fff" stroke="#333" stroke-width="0.75"/><path d="M239.31,288.96 L240.80,286.47" stroke="#555" stroke-width="0.45"/><path d="M240.17,289.47 L241.66,286.99" stroke="#555" stroke-width="0.45"/><path d="M241.02,289.99 L242.52,287.50" stroke="#555" stroke-width="0.45"/><path d="M241.88,290.50 L243.38,288.02" stroke="#555" stroke-width="0.45"/><path d="M242.74,291.02 L244.23,288.53" stroke="#555" stroke-width="0.45"/><path d="M243.60,291.53 L245.09,289.05" stroke="#555" stroke-width="0.45"/><path d="M244.45,292.05 L245.95,289.56" stroke="#555" stroke-width="0.45"/><path d="M245.31,292.56 L246.80,290.08" stroke="#555" stroke-width="0.45"/><path d="M246.17,293.08 L247.66,290.59" stroke="#555" stroke-width="0.45"/><path d="M247.02,293.59 L248.52,291.11" stroke="#555" stroke-width="0.45"/><path d="M247.88,294.11 L249.37,291.62" stroke="#555" stroke-width="0.45"/><path d="M248.74,294.62 L250.23,292.14" stroke="#555" stroke-width="0.45"/><path d="M249.60,295.14 L251.09,292.65" stroke="#555" stroke-width="0.45"/><path d="M250.45,295.66 L251.95,293.17" stroke="#555" stroke-width="0.45"/><path d="M251.31,296.17 L252.80,293.68" stroke="#555" stroke-width="0.45"/><path d="M260.23,299.84 L257.95,301.10 L255.73,299.76 L255.77,297.16 L258.05,295.90 L260.27,297.24Z" fill="#fff" stroke="#333" stroke-width="0.8"/><circle cx="258.00" cy="298.50" r="1.17" fill="none" stroke="#555" stroke-width="0.5"/><path d="M257,287.2 L253.9,293.5" fill="none" stroke="#444" stroke-width="0.65"/><rect x="256.50" y="280.40" width="9.40" height="7.30" fill="#ffff00"/><text x="261.20" y="286.10" font-size="7.2" text-anchor="middle" fill="#000" stroke="#000" stroke-width="0.15">10</text><path d="M232.25,310.74 L265.25,330.74 L266.75,328.26 L233.75,308.26 Z" fill="#fff" stroke="#333" stroke-width="0.75"/><path d="M233.10,311.26 L234.61,308.78" stroke="#555" stroke-width="0.45"/><path d="M233.96,311.78 L235.46,309.30" stroke="#555" stroke-width="0.45"/><path d="M234.81,312.29 L236.32,309.81" stroke="#555" stroke-width="0.45"/><path d="M235.67,312.81 L237.17,310.33" stroke="#555" stroke-width="0.45"/><path d="M236.52,313.33 L238.03,310.85" stroke="#555" stroke-width="0.45"/><path d="M237.38,313.85 L238.88,311.37" stroke="#555" stroke-width="0.45"/><path d="M238.23,314.37 L239.74,311.89" stroke="#555" stroke-width="0.45"/><path d="M239.09,314.89 L240.59,312.41" stroke="#555" stroke-width="0.45"/><path d="M239.95,315.40 L241.45,312.92" stroke="#555" stroke-width="0.45"/><path d="M240.80,315.92 L242.30,313.44" stroke="#555" stroke-width="0.45"/><path d="M241.66,316.44 L243.16,313.96" stroke="#555" stroke-width="0.45"/><path d="M242.51,316.96 L244.01,314.48" stroke="#555" stroke-width="0.45"/><path d="M243.37,317.48 L244.87,315.00" stroke="#555" stroke-width="0.45"/><path d="M244.22,318.00 L245.72,315.52" stroke="#555" stroke-width="0.45"/><path d="M245.08,318.51 L246.58,316.03" stroke="#555" stroke-width="0.45"/><path d="M245.93,319.03 L247.43,316.55" stroke="#555" stroke-width="0.45"/><path d="M246.79,319.55 L248.29,317.07" stroke="#555" stroke-width="0.45"/><path d="M247.64,320.07 L249.15,317.59" stroke="#555" stroke-width="0.45"/><path d="M248.50,320.59 L250.00,318.11" stroke="#555" stroke-width="0.45"/><path d="M249.35,321.11 L250.86,318.63" stroke="#555" stroke-width="0.45"/><path d="M250.21,321.62 L251.71,319.14" stroke="#555" stroke-width="0.45"/><path d="M251.06,322.14 L252.57,319.66" stroke="#555" stroke-width="0.45"/><path d="M251.92,322.66 L253.42,320.18" stroke="#555" stroke-width="0.45"/><path d="M252.77,323.18 L254.28,320.70" stroke="#555" stroke-width="0.45"/><path d="M253.63,323.70 L255.13,321.22" stroke="#555" stroke-width="0.45"/><path d="M254.48,324.22 L255.99,321.74" stroke="#555" stroke-width="0.45"/><path d="M255.34,324.73 L256.84,322.25" stroke="#555" stroke-width="0.45"/><path d="M268.22,330.85 L265.94,332.10 L263.72,330.75 L263.78,328.15 L266.06,326.90 L268.28,328.25Z" fill="#fff" stroke="#333" stroke-width="0.8"/><circle cx="266.00" cy="329.50" r="1.17" fill="none" stroke="#555" stroke-width="0.5"/><path d="M252.8,314.4 L248.6,321.8" fill="none" stroke="#444" stroke-width="0.65"/><rect x="252.30" y="306.50" width="8.30" height="8.20" fill="#ffff00"/><text x="256.45" y="313.10" font-size="7.2" text-anchor="middle" fill="#000" stroke="#000" stroke-width="0.15">11</text><path d="M232.40,319.50 L230.90,322.10 L227.90,322.10 L226.40,319.50 L227.90,316.90 L230.90,316.90Z" fill="#555" stroke="#333" stroke-width="0.8"/><circle cx="229.4" cy="319.5" r="1.4" fill="#aaa"/><rect x="225.10" y="323.40" width="9.30" height="7.20" fill="#ffff00"/><text x="229.75" y="329.00" font-size="7.2" text-anchor="middle" fill="#000" stroke="#000" stroke-width="0.15">12</text><path d="M217.28,328.76 L235.78,339.26 L237.22,336.74 L218.72,326.24 Z" fill="#fff" stroke="#333" stroke-width="0.75"/><path d="M218.15,329.25 L219.59,326.73" stroke="#555" stroke-width="0.45"/><path d="M219.02,329.75 L220.46,327.23" stroke="#555" stroke-width="0.45"/><path d="M219.89,330.24 L221.32,327.72" stroke="#555" stroke-width="0.45"/><path d="M220.76,330.74 L222.19,328.21" stroke="#555" stroke-width="0.45"/><path d="M221.63,331.23 L223.06,328.71" stroke="#555" stroke-width="0.45"/><path d="M222.50,331.72 L223.93,329.20" stroke="#555" stroke-width="0.45"/><path d="M223.37,332.22 L224.80,329.69" stroke="#555" stroke-width="0.45"/><path d="M224.24,332.71 L225.67,330.19" stroke="#555" stroke-width="0.45"/><path d="M225.11,333.20 L226.54,330.68" stroke="#555" stroke-width="0.45"/><path d="M225.98,333.70 L227.41,331.18" stroke="#555" stroke-width="0.45"/><path d="M226.85,334.19 L228.28,331.67" stroke="#555" stroke-width="0.45"/><path d="M227.72,334.68 L229.15,332.16" stroke="#555" stroke-width="0.45"/><path d="M228.59,335.18 L230.02,332.66" stroke="#555" stroke-width="0.45"/><path d="M229.46,335.67 L230.89,333.15" stroke="#555" stroke-width="0.45"/><path d="M238.76,339.28 L236.52,340.60 L234.26,339.32 L234.24,336.72 L236.48,335.40 L238.74,336.68Z" fill="#fff" stroke="#333" stroke-width="0.8"/><circle cx="236.50" cy="338.00" r="1.17" fill="none" stroke="#555" stroke-width="0.5"/><path d="M226.6,340.2 L228.7,335.4" fill="none" stroke="#444" stroke-width="0.65"/><rect x="218.80" y="339.70" width="10.40" height="7.70" fill="#ffff00"/><text x="224.00" y="345.80" font-size="7.2" text-anchor="middle" fill="#000" stroke="#000" stroke-width="0.15">13</text><path d="M193,341.6 Q187,342.3 187.2,346.1 Q187.5,350.5 195.8,350.7 Q204.5,350.5 204.6,346.1 Q204.5,342.3 198.6,341.6" fill="none" stroke="#333" stroke-width="2"/><path d="M193,341.6 Q187,342.3 187.2,346.1 Q187.5,350.5 195.8,350.7 Q204.5,350.5 204.6,346.1 Q204.5,342.3 198.6,341.6" fill="none" stroke="#fff" stroke-width="0.7"/><path d="M187.4,360.3 L187.4,377.5 Q196.1,382 205,377.5 L205,360.3 Z" fill="#fff" stroke="#262626" stroke-width="0.9"/><ellipse cx="196.1" cy="360.3" rx="8.8" ry="3.9" fill="#fff" stroke="#262626" stroke-width="0.9"/><ellipse cx="196.1" cy="360.6" rx="6.9" ry="2.7" fill="none" stroke="#262626" stroke-width="0.8"/><path d="M187.4,364.5 Q196.1,368.7 205,364.5" fill="none" stroke="#262626" stroke-width="0.8"/><path d="M187.4,366.5 Q196.1,370.7 205,366.5" fill="none" stroke="#262626" stroke-width="0.8"/><path d="M187.4,368.5 Q196.1,372.7 205,368.5" fill="none" stroke="#262626" stroke-width="0.8"/><path d="M187.4,374 Q196.1,378.2 205,374" fill="none" stroke="#262626" stroke-width="0.8"/><path d="M187.4,375.8 Q196.1,380.0 205,375.8" fill="none" stroke="#262626" stroke-width="0.8"/><path d="M187.4,377.5 Q196.1,381.7 205,377.5" fill="none" stroke="#262626" stroke-width="0.8"/><path d="M179,370.2 L187.4,367.1" fill="none" stroke="#444" stroke-width="0.65"/><rect x="169.40" y="369.30" width="10.20" height="7.50" fill="#ffff00"/><text x="174.50" y="375.20" font-size="7.2" text-anchor="middle" fill="#000" stroke="#000" stroke-width="0.15">14</text><path d="M185.7,392 L185.7,384.5 Q189,381 193,384.5 L193,394.5 L210,396.5 Q215,396 217.2,399 L218.2,402.3 L220.3,416.9 L220.3,433.7 L216.1,442.1 L209,444.5 L214,448.4 L221.4,456.8 L225.6,467.2 L224.8,475 Q215,482 203.5,476 L203.5,471.4 L201.4,465.1 L193,456.8 L182.6,448.4 L178.4,437.9 L179.4,429.5 L182.6,416.9 L184.7,406.4 Z" fill="#fff" stroke="#262626" stroke-width="0.9"/><circle cx="188.9" cy="387.6" r="1.7" fill="none" stroke="#262626" stroke-width="0.8"/><ellipse cx="196.2" cy="399.1" rx="9.2" ry="4.5" fill="none" stroke="#262626" stroke-width="0.9"/><ellipse cx="196.2" cy="399.6" rx="7.2" ry="3.1" fill="none" stroke="#444" stroke-width="0.6"/><path d="M184.7,401 Q196,408 210,405 L218.2,402.3" fill="none" stroke="#444" stroke-width="0.6"/><circle cx="213" cy="401.2" r="1.5" fill="none" stroke="#262626" stroke-width="0.8"/><path d="M210,396.5 Q209,402 211,405" fill="none" stroke="#444" stroke-width="0.6"/><path d="M186,410 L194,414 L200,410 L212,408 M194,414 L196,428 L199,440 L207,443 M182.6,432.7 L197.3,443.1 L203,446" fill="none" stroke="#444" stroke-width="0.6"/><circle cx="206.7" cy="416.9" r="4.4" fill="none" stroke="#555" stroke-width="0.6"/><circle cx="206.7" cy="416.9" r="2.8" fill="none" stroke="#262626" stroke-width="0.9"/><circle cx="187.8" cy="422.2" r="4.4" fill="none" stroke="#555" stroke-width="0.6"/><circle cx="187.8" cy="422.2" r="2.8" fill="none" stroke="#262626" stroke-width="0.9"/><circle cx="207.7" cy="434.7" r="4.4" fill="none" stroke="#555" stroke-width="0.6"/><circle cx="207.7" cy="434.7" r="2.8" fill="none" stroke="#262626" stroke-width="0.9"/><path d="M182.6,448.4 Q196,453 209,444.5" fill="none" stroke="#444" stroke-width="0.6"/><path d="M203.5,471.4 Q214,476.5 225.2,470.5" fill="none" stroke="#262626" stroke-width="0.8"/><path d="M203.8,474 Q214,479 225,473.2" fill="none" stroke="#444" stroke-width="0.6"/><path d="M178.6,406.5 L184.7,404" fill="none" stroke="#444" stroke-width="0.65"/><rect x="168.50" y="403.30" width="10.60" height="7.70" fill="#ffff00"/><text x="173.80" y="409.40" font-size="7.2" text-anchor="middle" fill="#000" stroke="#000" stroke-width="0.15">15</text><ellipse cx="231.8" cy="396.6" rx="17.3" ry="9.5" transform="rotate(57 231.8 396.6)" fill="none" stroke="#333" stroke-width="1.1"/><path d="M231.8,397 L219.3,404.4" fill="none" stroke="#444" stroke-width="0.65"/><path d="M244.4,398 L254.9,398" fill="none" stroke="#444" stroke-width="0.65"/><rect x="254.70" y="393.70" width="9.60" height="8.60" fill="#f27d7d"/><text x="259.50" y="400.70" font-size="7.2" text-anchor="middle" fill="#7a7a7a" stroke="#7a7a7a" stroke-width="0.15">17</text><path d="M151,427.1 L154.8,435.7" fill="none" stroke="#444" stroke-width="0.65"/><rect x="144.70" y="418.10" width="9.60" height="7.60" fill="#ffff00"/><text x="149.50" y="424.10" font-size="7.2" text-anchor="middle" fill="#000" stroke="#000" stroke-width="0.15">19</text><ellipse cx="157.2" cy="441.2" rx="4.2" ry="4.6" fill="#fff" stroke="#333" stroke-width="1.4"/><ellipse cx="154" cy="443" rx="4.8" ry="4.9" fill="#fff" stroke="#262626" stroke-width="0.9"/><ellipse cx="153.6" cy="443.4" rx="2.6" ry="2.9" fill="none" stroke="#333" stroke-width="0.7"/><path d="M163.5,427.1 L165.2,431" fill="none" stroke="#444" stroke-width="0.65"/><rect x="157.10" y="420.00" width="9.60" height="7.60" fill="#ffff00"/><text x="161.90" y="426.00" font-size="7.2" text-anchor="middle" fill="#000" stroke="#000" stroke-width="0.15">20</text><path d="M163.2,432.2 Q168.7,430.5 169.5,435 Q169.8,438.8 166,438.7 L165.5,437.5" fill="none" stroke="#262626" stroke-width="1.1"/><path d="M175.82,455.39 L166.82,460.89 L168.18,463.11 L177.18,457.61 Z" fill="#fff" stroke="#333" stroke-width="0.75"/><path d="M174.97,455.91 L176.32,458.13" stroke="#555" stroke-width="0.45"/><path d="M174.12,456.43 L175.47,458.65" stroke="#555" stroke-width="0.45"/><path d="M173.26,456.96 L174.62,459.17" stroke="#555" stroke-width="0.45"/><path d="M172.41,457.48 L173.76,459.70" stroke="#555" stroke-width="0.45"/><path d="M171.56,458.00 L172.91,460.22" stroke="#555" stroke-width="0.45"/><path d="M170.70,458.52 L172.06,460.74" stroke="#555" stroke-width="0.45"/><path d="M164.77,463.67 L164.69,460.47 L167.42,458.80 L170.23,460.33 L170.31,463.53 L167.58,465.20Z" fill="#fff" stroke="#333" stroke-width="0.8"/><circle cx="167.50" cy="462.00" r="1.44" fill="none" stroke="#555" stroke-width="0.5"/><path d="M179.5,471.9 L173.8,463" fill="none" stroke="#444" stroke-width="0.65"/><rect x="177.10" y="471.40" width="10.50" height="8.60" fill="#ffff00"/><text x="182.35" y="478.40" font-size="7.2" text-anchor="middle" fill="#000" stroke="#000" stroke-width="0.15">16</text></svg><svg width="50" height="200" style="left:0;top:0"><rect x="15.5" y="34.0" width="14" height="14" rx="1" fill="url(#bg)" stroke="#8a8a8a" stroke-width="1"/><rect x="16.5" y="35.0" width="12" height="12" fill="none" stroke="#fafafa" stroke-width="0.8" opacity="0.8"/><rect x="17.2" y="39.8" width="9.8" height="2.2" fill="#5a5a5a"/><rect x="21" y="36" width="2.2" height="10" fill="#5a5a5a"/><path d="M29.6,38.2 L32.2,41 L29.6,43.8 Z" fill="#ececec"/><rect x="15.5" y="57.0" width="14" height="14" rx="1" fill="url(#bg)" stroke="#8a8a8a" stroke-width="1"/><rect x="16.5" y="58.0" width="12" height="12" fill="none" stroke="#fafafa" stroke-width="0.8" opacity="0.8"/><rect x="17.2" y="62.8" width="9.8" height="2.2" fill="#5a5a5a"/><path d="M15.4,61 L12.6,63.9 L15.4,66.8 Z" fill="#ececec"/><rect x="15.5" y="86.0" width="14" height="14" rx="1" fill="url(#bg)" stroke="#8a8a8a" stroke-width="1"/><rect x="16.5" y="87.0" width="12" height="12" fill="none" stroke="#fafafa" stroke-width="0.8" opacity="0.8"/><rect x="16.3" y="87.2" width="3.6" height="3.6" fill="#6e6e6e"/><rect x="24.1" y="87.2" width="3.6" height="3.6" fill="#6e6e6e"/><rect x="16.3" y="95.1" width="3.6" height="3.6" fill="#6e6e6e"/><rect x="24.1" y="95.1" width="3.6" height="3.6" fill="#6e6e6e"/><rect x="15.5" y="109.0" width="14" height="14" rx="1" fill="url(#bg)" stroke="#8a8a8a" stroke-width="1"/><rect x="16.5" y="110.0" width="12" height="12" fill="none" stroke="#fafafa" stroke-width="0.8" opacity="0.8"/><rect x="18.5" y="112.5" width="7.4" height="7" fill="#d8d8d8" stroke="#444" stroke-width="1"/><rect x="14" y="161.5" width="4" height="4" fill="#eee" stroke="#666" stroke-width="0.6"/><rect x="14" y="167" width="4" height="4" fill="#eee" stroke="#666" stroke-width="0.6"/><rect x="14" y="172.3" width="4" height="4" fill="#eee" stroke="#666" stroke-width="0.6"/><rect x="19" y="162" width="10" height="14" fill="url(#fade)"/><path d="M19.3,162 V176" stroke="#fff" stroke-width="1"/><path d="M21,169.3 H27.5" stroke="#4a4a4a" stroke-width="1.8"/><path d="M26.5,166.5 L30,169.3 L26.5,172.1 Z" fill="#4a4a4a"/></svg>
</body></html>
